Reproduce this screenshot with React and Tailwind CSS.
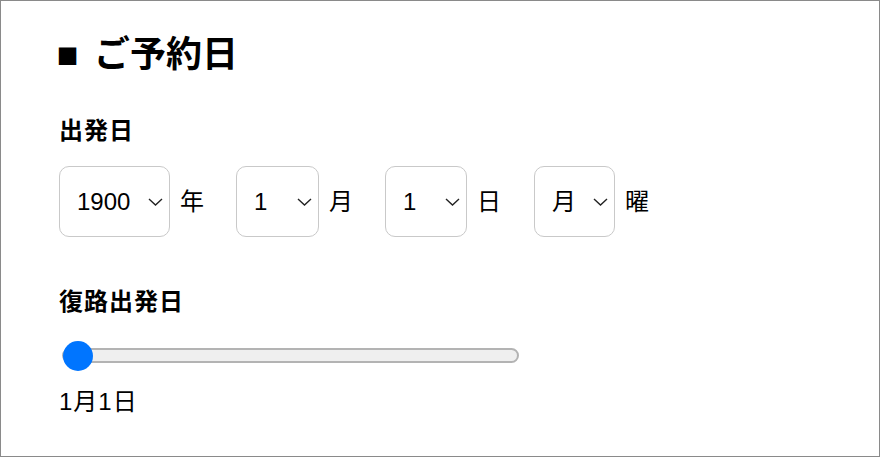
import React from "react";

const FONT = { fontFamily: '"Liberation Sans", "Noto Sans CJK JP", sans-serif' };

function Chevron() {
  return (
    <svg width="15" height="8" viewBox="0 0 15 8" fill="none" className="pointer-events-none absolute right-[7px] top-1/2 -translate-y-1/2">
      <path d="M1 1 L7.5 7 L14 1" stroke="#222" strokeWidth="1.4" />
    </svg>
  );
}

function Select({ value, options, width }) {
  return (
    <div className="relative shrink-0" style={{ width }}>
      <select
        defaultValue={value}
        className="h-[71px] w-full appearance-none rounded-[10px] border-[1.5px] border-[#c9c9c9] bg-white pl-[17px] text-[24px] leading-none text-black outline-none"
        style={FONT}
      >
        {options.map((o) => (
          <option key={o} value={o}>{o}</option>
        ))}
      </select>
      <Chevron />
    </div>
  );
}

export default function App() {
  return (
    <div className="h-[457px] w-[880px] border border-[#8a8a8a] bg-white text-black" style={FONT}>
      <div className="pl-[58px] pt-[31px]">
        <h1 className="flex h-[46px] items-center text-[36px] font-bold leading-none">
          <span className="mr-[18px] flex w-[17px] items-center justify-center text-[36px] leading-none">■</span>
          <span>ご予約日</span>
        </h1>
        <h2 className="mt-[37px] h-[32px] text-[24px] font-bold leading-[32px] tracking-[1px]">出発日</h2>
        <div className="mt-[19px] flex items-center">
          <Select value="1900" options={["1900", "1901", "1902"]} width="111px" />
          <span className="ml-[10px] mr-[32px] text-[24px]">年</span>
          <Select value="1" options={["1", "2", "3"]} width="83px" />
          <span className="ml-[10px] mr-[32px] text-[24px]">月</span>
          <Select value="1" options={["1", "2", "3"]} width="82px" />
          <span className="ml-[10px] mr-[33px] text-[24px]">日</span>
          <Select value="月" options={["月", "火", "水"]} width="81px" />
          <span className="ml-[10px] text-[24px]">曜</span>
        </div>
        <h2 className="mt-[49px] h-[32px] text-[24px] font-bold leading-[32px] tracking-[1px]">復路出発日</h2>
        <div className="relative mt-[23px] h-[30px] w-[460px]">
          <div className="absolute left-[3px] right-0 top-[7px] h-[15px] rounded-full border-2 border-[#b3b3b3] bg-[#efefef]" />
          <div className="absolute left-[4px] top-0 h-[30px] w-[30px] rounded-full bg-[#0075ff]" />
        </div>
        <div className="mt-[15px] h-[32px] text-[24px] leading-[32px] tracking-[1px]">1月1日</div>
      </div>
    </div>
  );
}
